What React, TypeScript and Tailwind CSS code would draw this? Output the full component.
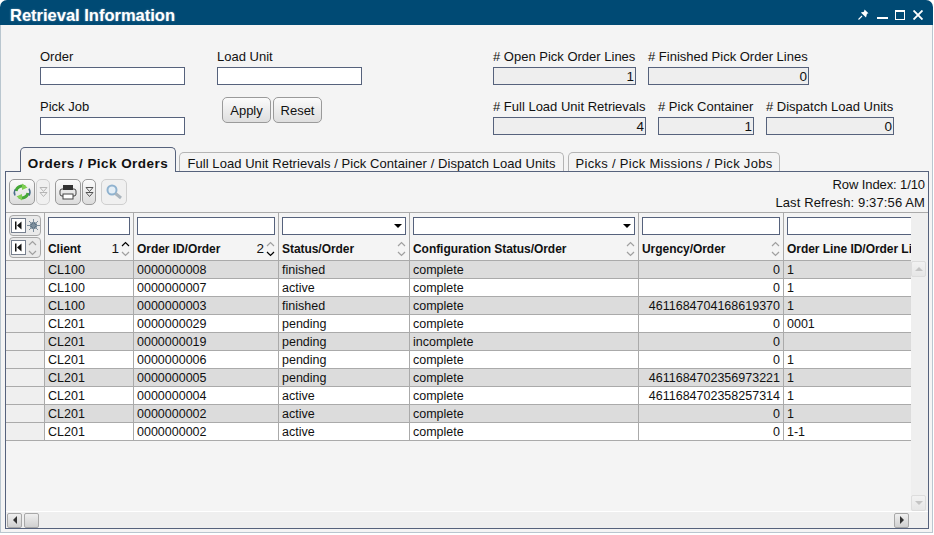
const rows = [
  ['CL100', '0000000008', 'finished', 'complete', '0', '1'],
  ['CL100', '0000000007', 'active', 'complete', '0', '1'],
  ['CL100', '0000000003', 'finished', 'complete', '4611684704168619370', '1'],
  ['CL201', '0000000029', 'pending', 'complete', '0', '0001'],
  ['CL201', '0000000019', 'pending', 'incomplete', '0', ''],
  ['CL201', '0000000006', 'pending', 'complete', '0', '1'],
  ['CL201', '0000000005', 'pending', 'complete', '4611684702356973221', '1'],
  ['CL201', '0000000004', 'active', 'complete', '4611684702358257314', '1'],
  ['CL201', '0000000002', 'active', 'complete', '0', '1'],
  ['CL201', '0000000002', 'active', 'complete', '0', '1-1'],
];

function Field({ label, width, value, dim }: { label: string; width: string; value?: string; dim?: boolean }) {
  return (
    <div className={`flex flex-col ${width}`}>
      <div className="h-[20px] text-[13px] leading-[20px] whitespace-nowrap text-[#111]">{label}</div>
      <div className={`h-[18px] border border-[#56627c] text-right text-[13.5px] leading-[17px] pr-[1px] ${dim ? 'bg-[#eeeeee]' : 'bg-white'}`}>
        {value}
      </div>
    </div>
  );
}

function Sort({ up, down }: { up?: boolean; down?: boolean }) {
  return (
    <svg width="11" height="16" viewBox="0 0 11 16" fill="none" strokeWidth="1.2" className="shrink-0">
      <path d="M2 5 5.5 1.5 9 5" stroke={up ? '#000' : '#a0a0a0'} />
      <path d="M2 11 5.5 14.5 9 11" stroke={down ? '#000' : '#a0a0a0'} />
    </svg>
  );
}

function HeaderCell({ width, label, kind, num, up, down, last }: { width: string; label: string; kind?: 'select'; num?: string; up?: boolean; down?: boolean; last?: boolean }) {
  return (
    <div className={`${width} shrink-0 flex flex-col overflow-hidden ${last ? 'pl-[3px]' : 'border-r border-[#aaaaaa] px-[3px]'}`}>
      <div className={`mt-[4px] h-[18px] border border-[#56627c] bg-white flex items-center justify-end ${last ? 'w-[130px] shrink-0' : ''}`}>
        {kind === 'select' && <div className="mr-[3px] w-0 h-0 border-x-[4px] border-t-[4px] border-x-transparent border-t-black" />}
      </div>
      <div className="mt-[5px] flex items-center h-[18px] font-bold text-[12px] tracking-[-0.05px] text-[#111] whitespace-nowrap">
        <span className="flex-1 min-w-0">{label}</span>
        {num && <span className="font-normal text-[13.5px] mr-px">{num}</span>}
        {!last && (
          <div className="-mr-px -mt-px">
            <Sort up={up} down={down} />
          </div>
        )}
      </div>
    </div>
  );
}

function ToolButton({ children, width, dim }: { children?: React.ReactNode; width: string; dim?: boolean }) {
  return (
    <div className={`h-[26px] ${width} rounded-[5px] border flex items-center justify-center shrink-0 ${dim ? 'border-[#cfcfcf] bg-[#f0f0f0]' : 'border-[#9a9a9a] bg-gradient-to-b from-[#fbfbfb] to-[#dcdcdc]'}`}>
      {children}
    </div>
  );
}

function DoubleDown({ color }: { color: string }) {
  return (
    <svg width="9" height="12" viewBox="0 0 9 12" fill="none" stroke={color} strokeWidth="1">
      <path d="M1 1.5h7L4.5 5.5z" />
      <path d="M1 6.5h7L4.5 10.5z" />
    </svg>
  );
}

function FirstIcon() {
  return (
    <div className="w-[15px] h-[15px] border border-[#77808f] bg-white flex items-center justify-center shrink-0">
      <svg width="9" height="9" viewBox="0 0 9 9" fill="#111">
        <rect x="1" y="0.5" width="1.5" height="8" />
        <path d="M7.5 0.5v8L3 4.5z" />
      </svg>
    </div>
  );
}

function ScrollBtn({ children, width, height, dim }: { children?: React.ReactNode; width: string; height: string; dim?: boolean }) {
  return (
    <div className={`${width} ${height} shrink-0 rounded-[2px] border flex items-center justify-center bg-gradient-to-b ${dim ? 'border-[#dddddd] from-[#f2f2f2] to-[#e6e6e6]' : 'border-[#a8a8a8] from-[#f0f0f0] to-[#d0d0d0]'}`}>
      {children}
    </div>
  );
}

export default function App() {
  const cols = ['w-[89px]', 'w-[145px]', 'w-[131px]', 'w-[229px]', 'w-[145px]', 'w-[127px]'];

  return (
    <div className="w-[934px] h-[535px] bg-white overflow-hidden text-[#111]" style={{ fontFamily: '"Liberation Sans", Arial, sans-serif' }}>
      <div className="w-[933px] h-[533px] rounded-t-[7px] flex flex-col overflow-hidden">
        {/* title bar */}
        <div className="h-[25px] bg-[#004a74] flex items-center justify-between pt-[4px] pl-[10px] pr-[10px] shrink-0">
          <span className="text-white font-bold text-[16.5px] leading-[20px] [text-shadow:0_0_2px_rgba(255,255,255,0.45)]">Retrieval Information</span>
          <div className="flex items-center">
            <svg width="11" height="11" viewBox="0 0 11 11">
              <path d="M0.5 10.5 4 7" stroke="#fff" strokeWidth="1.1" />
              <path d="M6.5 0.5 10.5 4.2 9 4.8 8 8.5 2.8 3.6 6 2.8z" fill="#fff" />
            </svg>
            <div className="w-[11px] h-[2px] bg-white mt-[7px] ml-[8px]" />
            <div className="w-[10px] h-[10px] ml-[7px] border border-white border-t-2" />
            <svg width="10" height="10" viewBox="0 0 10 10" stroke="#fff" strokeWidth="1.9" className="ml-[8px]">
              <path d="M0.5 0.5 9.5 9.5M9.5 0.5 0.5 9.5" />
            </svg>
          </div>
        </div>

        <div className="flex-1 min-h-0 bg-[#f4f4f4] border-x border-b border-[#b9c6cf] flex flex-col">
          {/* filter form */}
          <div className="h-[122px] shrink-0 pt-[22px] pl-[39px] flex">
            <div className="flex flex-col gap-[12px] w-[177px]">
              <Field label="Order" width="w-[145px]" />
              <Field label="Pick Job" width="w-[145px]" />
            </div>
            <div className="flex flex-col w-[276px]">
              <Field label="Load Unit" width="w-[145px]" />
              <div className="mt-[12px] ml-[5px] flex gap-[2px]">
                <button className="w-[49px] h-[26px] pt-px rounded-[5px] border border-[#9a9a9a] bg-gradient-to-b from-[#fbfbfb] to-[#dedede] text-[13px]">Apply</button>
                <button className="w-[49px] h-[26px] pt-px rounded-[5px] border border-[#9a9a9a] bg-gradient-to-b from-[#fbfbfb] to-[#dedede] text-[13px]">Reset</button>
              </div>
            </div>
            <div className="flex flex-col gap-[12px]">
              <div className="flex gap-[12px]">
                <Field label="# Open Pick Order Lines" width="w-[143px]" value="1" dim />
                <Field label="# Finished Pick Order Lines" width="w-[161px]" value="0" dim />
              </div>
              <div className="flex gap-[12px]">
                <Field label="# Full Load Unit Retrievals" width="w-[153px]" value="4" dim />
                <Field label="# Pick Container" width="w-[96px]" value="1" dim />
                <Field label="# Dispatch Load Units" width="w-[128px]" value="0" dim />
              </div>
            </div>
          </div>

          {/* tabs */}
          <div className="h-[24px] shrink-0 flex items-end pl-[19px] gap-[3px]">
            <div className="relative z-10 h-[25px] w-[156px] -mb-px rounded-t-[5px] border border-b-0 border-[#56627c] bg-[#f4f4f4] text-center font-bold text-[13.5px] leading-[32px] tracking-[0.45px] whitespace-nowrap">
              Orders / Pick Orders
            </div>
            <div className="h-[19px] w-[385px] rounded-t-[5px] border border-b-0 border-[#b4b4b4] bg-[#f4f4f4] text-center text-[13px] leading-[22px] tracking-[0.06px] whitespace-nowrap">
              Full Load Unit Retrievals / Pick Container / Dispatch Load Units
            </div>
            <div className="h-[19px] w-[212px] ml-px rounded-t-[5px] border border-b-0 border-[#b4b4b4] bg-[#f4f4f4] text-center text-[13px] leading-[22px] tracking-[0.3px] whitespace-nowrap">
              Picks / Pick Missions / Pick Jobs
            </div>
          </div>

          {/* tab content */}
          <div className="ml-[4px] w-[924px] h-[358px] shrink-0 border border-[#56627c] flex flex-col overflow-hidden">
            {/* toolbar */}
            <div className="h-[41px] shrink-0 border-b border-[#aaaaaa] flex justify-between pl-[3px] pr-[3px]">
              <div className="flex items-center">
                <ToolButton width="w-[26px]">
                  <svg width="20" height="20" viewBox="0 0 20 20" fill="none" strokeWidth="3">
                    <path d="M4 9a6 6 0 0 1 9-4" stroke="#45a838" />
                    <path d="M16 11a6 6 0 0 1-9 4" stroke="#45a838" />
                    <path d="M10 1.5 15.5 5.5 10 8z" fill="#7fcf52" stroke="none" />
                    <path d="M10 18.5 4.5 14.5 10 12z" fill="#7fcf52" stroke="none" />
                    <path d="M3 13.5a7 7 0 0 1 0-6" stroke="#4a6e8c" strokeWidth="1.5" />
                    <path d="M17 6.5a7 7 0 0 1 0 7" stroke="#4a6e8c" strokeWidth="1.5" />
                  </svg>
                </ToolButton>
                <div className="ml-px">
                  <ToolButton width="w-[14px]" dim><DoubleDown color="#b5b5b5" /></ToolButton>
                </div>
                <div className="ml-[5px]">
                  <ToolButton width="w-[26px]">
                    <svg width="18" height="16" viewBox="0 0 18 16">
                      <rect x="1" y="5" width="16" height="7" rx="2" fill="#e8e8e8" stroke="#444" />
                      <rect x="4" y="1" width="10" height="5" fill="#333" />
                      <rect x="4" y="10" width="10" height="5" fill="#fff" stroke="#444" />
                    </svg>
                  </ToolButton>
                </div>
                <div className="ml-px">
                  <ToolButton width="w-[14px]"><DoubleDown color="#555" /></ToolButton>
                </div>
                <div className="ml-[5px]">
                  <ToolButton width="w-[26px]" dim>
                    <svg width="18" height="18" viewBox="0 0 18 18" fill="none">
                      <circle cx="7" cy="7" r="4.5" stroke="#8fb2cf" strokeWidth="2" fill="#e4eef6" />
                      <path d="M10.5 10.5 16 15" stroke="#a9b4bd" strokeWidth="3" />
                    </svg>
                  </ToolButton>
                </div>
              </div>
              <div className="text-right text-[13px] leading-[18px] pt-[4px] whitespace-nowrap">
                <div className="tracking-[-0.1px]">Row Index: 1/10</div>
                <div className="tracking-[0.12px]">Last Refresh: 9:37:56 AM</div>
              </div>
            </div>

            {/* table + vertical scrollbar */}
            <div className="flex-1 min-h-0 flex">
              <div className="w-[905px] shrink-0 overflow-hidden">
                <div className="flex h-[48px] border-b border-[#aaaaaa]">
                  <div className="w-[39px] shrink-0 border-r border-[#aaaaaa] pl-[3px] pt-[2px] flex flex-col gap-px">
                    <div className="w-[32px] h-[21px] rounded-[4px] border border-[#a8a8a8] bg-[#eaeaea] flex items-center pl-px">
                      <FirstIcon />
                      <svg width="13" height="13" viewBox="0 0 13 13" className="ml-px">
                        <circle cx="6.5" cy="6.5" r="3.5" fill="#5f7485" />
                        <path d="M6.5 0v13M0 6.5h13M2 2l9 9M11 2l-9 9" stroke="#7d8f9d" strokeWidth="1" />
                      </svg>
                    </div>
                    <div className="w-[32px] h-[21px] rounded-[4px] border border-[#a8a8a8] bg-[#eaeaea] flex items-center pl-px">
                      <FirstIcon />
                      <div className="ml-px"><Sort /></div>
                    </div>
                  </div>
                  <HeaderCell width={cols[0]} label="Client" num="1" up />
                  <HeaderCell width={cols[1]} label="Order ID/Order" num="2" down />
                  <HeaderCell width={cols[2]} label="Status/Order" kind="select" />
                  <HeaderCell width={cols[3]} label="Configuration Status/Order" kind="select" />
                  <HeaderCell width={cols[4]} label="Urgency/Order" />
                  <HeaderCell width={cols[5]} label="Order Line ID/Order Line" last />
                </div>
                {rows.map((row, i) => (
                  <div key={i} className={`flex h-[18px] border-b border-[#aaaaaa] text-[12.5px] leading-[18px] ${i % 2 === 0 ? 'bg-[#dcdcdc]' : 'bg-white'}`}>
                    <div className="w-[39px] shrink-0 border-r border-[#aaaaaa] bg-[#efefef]" />
                    {row.map((cell, j) => (
                      <div key={j} className={`${cols[j]} shrink-0 px-[3px] whitespace-nowrap overflow-hidden ${j === 4 ? 'text-right' : ''} ${j < 5 ? 'border-r border-[#aaaaaa]' : ''}`}>
                        {cell}
                      </div>
                    ))}
                  </div>
                ))}
              </div>
              <div className="flex-1 bg-[#efefef] flex flex-col justify-between items-start pt-[48px]">
                <ScrollBtn width="w-[15px]" height="h-[16px]" dim>
                  <div className="w-0 h-0 border-x-[4px] border-b-[4px] border-x-transparent border-b-[#c4c4c4]" />
                </ScrollBtn>
                <ScrollBtn width="w-[15px]" height="h-[16px]" dim>
                  <div className="w-0 h-0 border-x-[4px] border-t-[4px] border-x-transparent border-t-[#c4c4c4]" />
                </ScrollBtn>
              </div>
            </div>

            {/* horizontal scrollbar */}
            <div className="h-[17px] shrink-0 border-t border-white bg-[#efefef] flex items-center pl-px">
              <ScrollBtn width="w-[15px]" height="h-[15px]">
                <div className="w-0 h-0 border-y-[4px] border-r-[4px] border-y-transparent border-r-[#333]" />
              </ScrollBtn>
              <div className="ml-[2px]">
                <ScrollBtn width="w-[15px]" height="h-[15px]" />
              </div>
              <div className="ml-[855px]">
                <ScrollBtn width="w-[15px]" height="h-[15px]">
                  <div className="w-0 h-0 border-y-[4px] border-l-[4px] border-y-transparent border-l-[#333]" />
                </ScrollBtn>
              </div>
            </div>
          </div>
        </div>
      </div>
    </div>
  );
}
